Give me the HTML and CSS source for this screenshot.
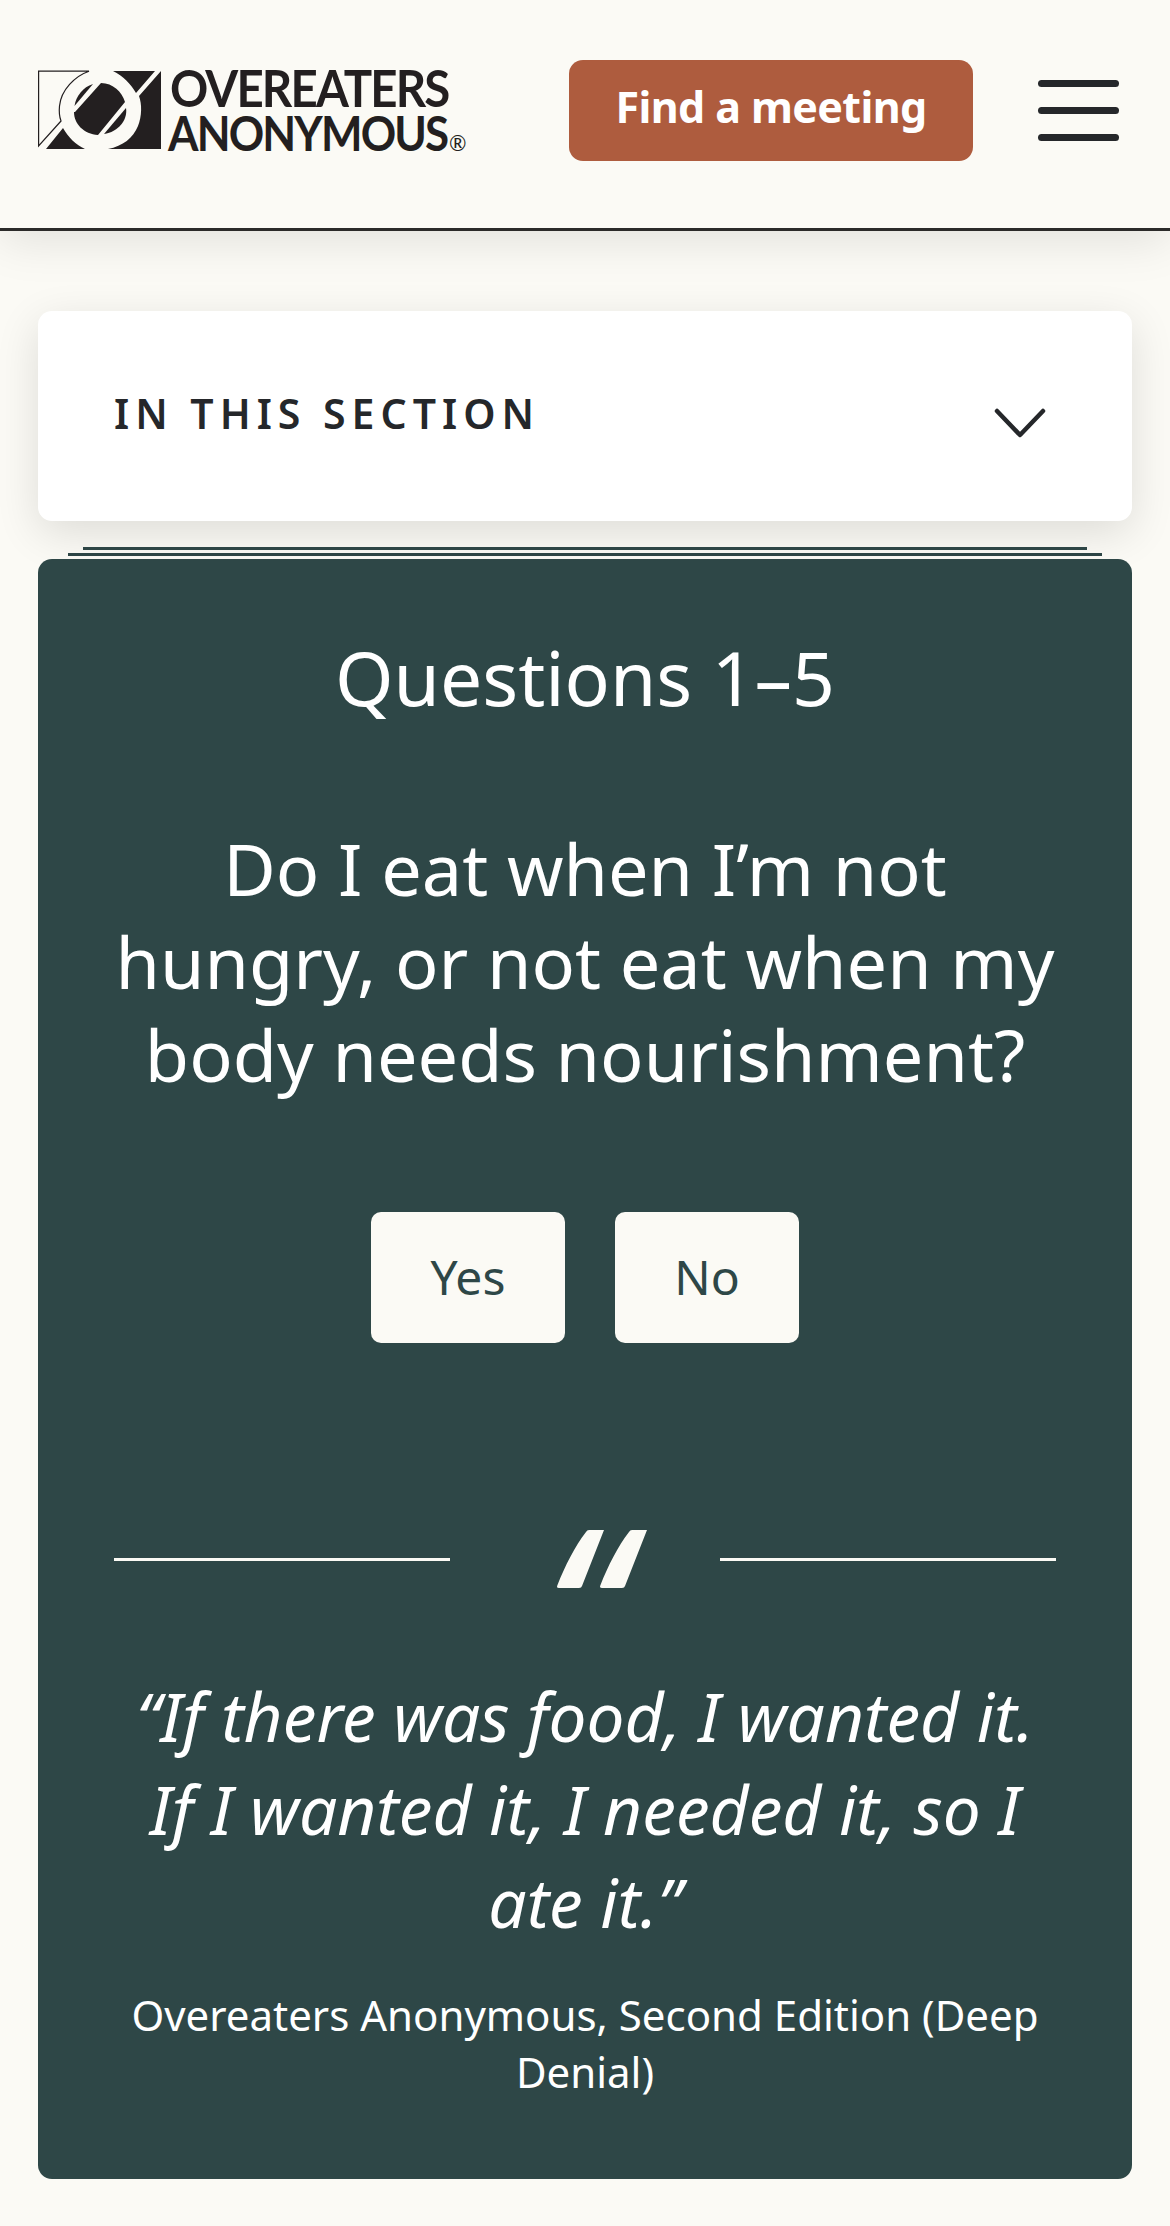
FILE: index.html
```html
<!DOCTYPE html>
<html lang="en">
<head>
<meta charset="utf-8">
<title>Questions 1–5 | Overeaters Anonymous</title>
<link rel="stylesheet" href="styles.css">
</head>
<body>
<header class="site-header">
  <a class="logo" href="#">
    <svg class="logo-mark" viewBox="0 0 123 79.500" aria-hidden="true">
      <path class="mark-outline" d="M.6 1.200H51C37 6 23 20 21.500 36C21 41 21.500 47 23 51L.6 76Z"/>
      <path class="ink" d="M75 1H117L98 23C93 14 85 6 75 1Z"/>
      <path class="ink" d="M123 1V79H70C85 76 95 68 100 56C104 46 104 34 101 26Z"/>
      <path class="ink" d="M8 79L25 58C30 67 38 75 47 79Z"/>
      <path class="ink" d="M36.500 36C38 26 45 17 55 14Z"/>
      <path class="ink" d="M37 42L63 13C75 13 84 22 87 32L60 65C46 64 36 54 36 42Z"/>
      <path class="ink" d="M66 64L88 38C90 50 80 62 66 64Z"/>
    </svg>
    <span class="logo-words">
      <span class="logo-line logo-line-a">OVEREATERS</span>
      <span class="logo-line logo-line-b">ANONYMOUS</span>
      <span class="reg">®</span>
    </span>
  </a>
  <a class="cta" href="#">Find a meeting</a>
  <button class="burger" type="button" aria-label="Menu"><span></span><span></span><span></span></button>
</header>

<main class="page">
  <section class="section-nav">
    <span class="section-label">IN THIS SECTION</span>
    <svg class="chev" viewBox="0 0 52 32" aria-hidden="true"><path d="M3 3L26 27L49 3"/></svg>
  </section>

  <div class="stack">
    <div class="stack-a"></div>
    <div class="stack-b"></div>
    <article class="quiz">
      <h1 class="quiz-title">Questions 1–5</h1>
      <p class="quiz-question">Do I eat when I’m not hungry, or not eat when my body needs nourishment?</p>
      <div class="answers">
        <button class="answer answer-yes" type="button"><span class="answer-text">Yes</span></button>
        <button class="answer answer-no" type="button"><span class="answer-text">No</span></button>
      </div>
      <div class="divider">
        <span class="rule"></span>
        <svg class="quote-mark" viewBox="0 0 90 58" aria-hidden="true"><path d="M32 0H47L25 56Q24.500 58 22 58H2Q-1 58 .5 55C8 36 18 16 29 2Q30 0 32 0Z"/><path d="M75 0H90L68 56Q67.500 58 65 58H45Q42 58 43.500 55C51 36 61 16 72 2Q73 0 75 0Z"/></svg>
        <span class="rule"></span>
      </div>
      <blockquote class="quote">“If there was food, I wanted it. If I wanted it, I needed it, so I ate it.”</blockquote>
      <p class="cite">Overeaters Anonymous, Second Edition (Deep Denial)</p>
    </article>
  </div>
</main>
</body>
</html>
```
FILE: styles.css
```css
* { box-sizing: border-box; }
html, body { margin: 0; padding: 0; }
body {
  background: #fbfaf5;
  color: #fff;
  font-family: "Noto Sans", sans-serif;
  height: 2226px;
  overflow: hidden;
}
.site-header {
  position: relative;
  z-index: 2;
  display: flex;
  align-items: center;
  height: 231px;
  padding: 0 51px 8px 38px;
  background: #fbfaf5;
  border-bottom: 3px solid #2b2a29;
  box-shadow: 0 10px 44px rgba(0, 0, 0, 0.1);
}
.logo {
  display: flex;
  align-items: center;
  gap: 7px;
  color: #231f20;
  text-decoration: none;
}
.logo-mark { width: 123px; height: 79.500px; display: block; flex: none; }
.ink { fill: #231f20; }
.mark-outline { fill: #fbfaf5; stroke: #231f20; stroke-width: 1.200px; }
.logo-words {
  position: relative;
  display: flex;
  flex-direction: column;
  font-family: "Lato", sans-serif;
  font-weight: 700;
}
.logo-line { white-space: nowrap; transform-origin: left center; letter-spacing: -2px; }
.logo-line-a { font-size: 51px; line-height: 46px; margin-left: 2px; transform: scaleX(0.93); }
.logo-line-b { font-size: 48px; line-height: 44px; transform: scaleX(0.915); }
.reg { position: absolute; left: 281px; bottom: 2px; font-size: 21px; line-height: 20px; font-weight: 400; }
.cta {
  margin-left: auto;
  width: 404px;
  height: 101px;
  display: flex;
  align-items: center;
  justify-content: center;
  padding-bottom: 8px;
  background: #ae5c3e;
  color: #fff;
  border-radius: 14px;
  font-size: 43px;
  font-weight: 700;
  letter-spacing: -0.6px;
  text-decoration: none;
}
.burger {
  width: 81px;
  margin-left: 65px;
  padding: 0;
  border: 0;
  background: none;
  display: flex;
  flex-direction: column;
  gap: 20px;
}
.burger span { display: block; height: 7px; border-radius: 4px; background: #25272a; }
.page { padding: 80px 38px 0; }
.section-nav {
  display: flex;
  align-items: center;
  justify-content: space-between;
  height: 210px;
  padding: 0 86px 0 76px;
  background: #fff;
  border-radius: 14px;
  box-shadow: 0 12px 44px rgba(0, 0, 0, 0.12);
}
.section-label {
  color: #25272a;
  font-size: 41px;
  font-weight: 600;
  letter-spacing: 6px;
  margin-bottom: 6px;
}
.chev { width: 52px; height: 32px; fill: none; stroke: #25272a; stroke-width: 4.500px; stroke-linecap: round; stroke-linejoin: round; margin-top: 16px; }
.stack { position: relative; padding-top: 38px; }
.stack-a, .stack-b { position: absolute; height: 3px; background: #2d4545; }
.stack-a { top: 26px; left: 45px; right: 45px; }
.stack-b { top: 32px; left: 30px; right: 30px; }
.quiz {
  position: relative;
  background: #2e4747;
  border-radius: 14px;
  height: 1620px;
  padding: 72px 76px 0;
  text-align: center;
}
.quiz-title { margin: 0; font-size: 75px; line-height: 93px; font-weight: 400; }
.quiz-question { margin: 98px 0 0; font-size: 72px; line-height: 93px; }
.answers { display: flex; justify-content: center; gap: 50px; margin-top: 111px; }
.answer {
  height: 131px;
  border: 0;
  border-radius: 10px;
  background: #fbfaf5;
  color: #2e4747;
  font-family: inherit;
  font-size: 48px;
  padding: 0 0 2px;
}
.answer-yes { width: 194px; }
.answer-no { width: 184px; }
.divider { display: flex; align-items: center; justify-content: space-between; margin-top: 187px; }
.rule { display: block; width: 336px; height: 3px; background: #fbfaf5; margin-top: 1px; }
.quote-mark { width: 90px; height: 58px; fill: #fbfaf5; margin-left: 34px; }
.quote { margin: 82px 0 0; font-size: 67.500px; line-height: 93px; font-style: italic; }
.cite { margin: 37px 0 0; font-size: 42px; line-height: 57px; }
```
